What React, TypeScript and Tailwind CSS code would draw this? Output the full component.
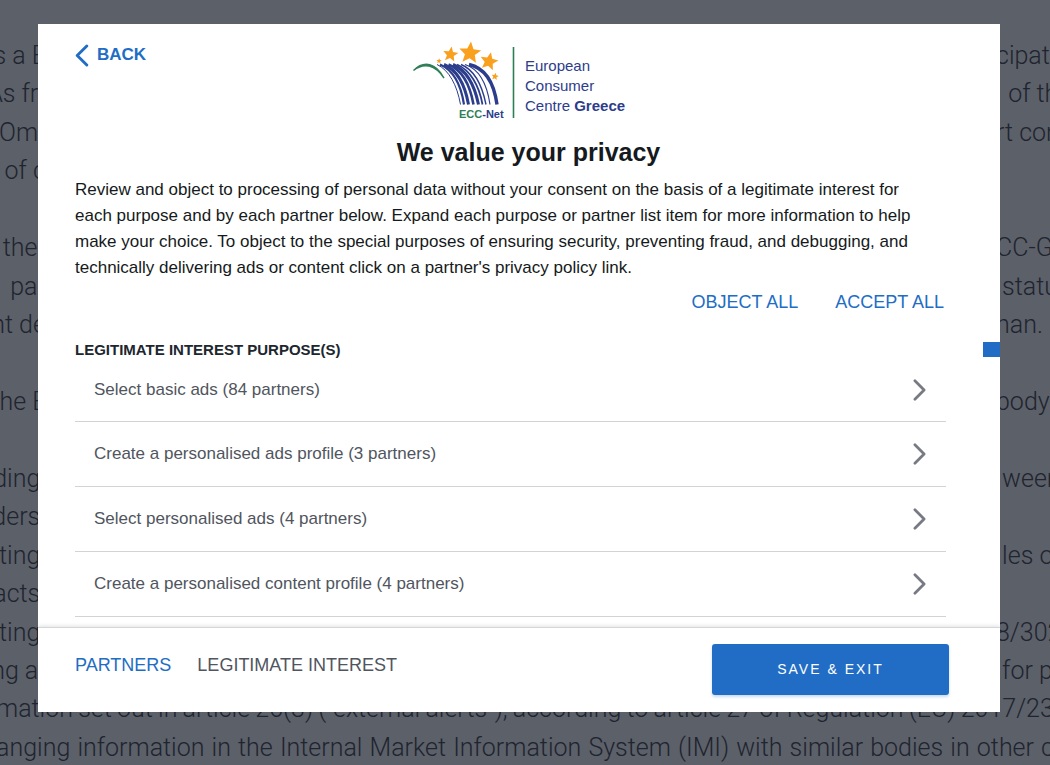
import { useState } from 'react';

type Line = { left?: string; right?: string; full?: string };

const articleLines: Line[] = [
  { left: 'is a E ', right: 'cipation' },
  { left: 'As fro', right: '  of the' },
  { left: 'Omb', right: 'rt cons' },
  { left: 'of c ' },
  {},
  { left: 'the r', right: 'CC-Gr' },
  { left: 'par ', right: ' status' },
  { left: 'ent de ', right: 'nan.' },
  {},
  { left: 'the Ei', right: 'body' },
  {},
  { left: 'nding i', right: ' ween' },
  { left: 'aders i' },
  { left: 'sting i', right: ' les of' },
  { left: 'tacts i' },
  { left: 'sting i', right: '8/302' },
  { left: 'ing an', right: ' for pr' },
  { full: 'mation set out in article 26(3) (“external alerts”), according to article 27 of Regulation (EU) 2017/23' },
  { full: 'anging information in the Internal Market Information System (IMI) with similar bodies in other c' },
];

const purposes = [
  'Select basic ads (84 partners)',
  'Create a personalised ads profile (3 partners)',
  'Select personalised ads (4 partners)',
  'Create a personalised content profile (4 partners)',
];

function ArticleBackdrop() {
  return (
    <div
      aria-hidden="true"
      className="h-screen overflow-hidden bg-[#5c6069] pt-[39px] flex flex-col justify-between font-[Roboto,sans-serif] font-light text-[25px] leading-[34px] text-[#20242f] whitespace-pre"
    >
      {articleLines.map((line, i) =>
        line.full ? (
          <div key={i} className="-ml-1 -mr-1 flex justify-between">
            {line.full.split(' ').map((word, j) => (
              <span key={j}>{word}</span>
            ))}
          </div>
        ) : (
          <div key={i} className="h-[34px] flex justify-between">
            <span className="w-[52px] flex justify-end">{line.left}</span>
            <span className="w-[54px]">{line.right}</span>
          </div>
        )
      )}
    </div>
  );
}

function Chevron({ className, flip }: { className: string; flip?: boolean }) {
  return (
    <svg viewBox="0 0 14 24" className={className} fill="none" stroke="currentColor" strokeWidth="3" strokeLinecap="round" strokeLinejoin="round" aria-hidden="true">
      <path d={flip ? 'M12 2 2 12l10 10' : 'M2 2l10 10L2 22'} />
    </svg>
  );
}

function Star({ x, y, r, turn = 0 }: { x: number; y: number; r: number; turn?: number }) {
  return (
    <path
      transform={`translate(${x} ${y}) rotate(${turn}) scale(${r})`}
      fill="#f9a01f"
      d="M0-1 .27-.36.95-.31.43.14.59.81 0 .45-.59.81-.43.14-.95-.31-.27-.36Z"
    />
  );
}

function Logo() {
  return (
    <svg viewBox="0 0 220 84" className="w-[220px] h-[84px]" role="img" aria-label="European Consumer Centre Greece">
      <Star x={59} y={13} r={11.5} turn={5} />
      <Star x={39.5} y={14.5} r={8} turn={8} />
      <Star x={78} y={21.5} r={9.5} turn={12} />
      <Star x={28} y={21} r={2.8} turn={5} />
      <Star x={84} y={36.5} r={3.8} turn={10} />
      <path d="M2.500 30.500C13 20 25 23 33 38 24 25 13 22 2.500 30.500Z" fill="#2d7f56" stroke="#2d7f56" strokeWidth="1.4" />
      <g fill="none" stroke="#2c3d8c">
        <path d="M26 24.500C38 30 46 45 49.500 64.500" strokeWidth="1" />
        <path d="M29 24.500C42 30 50 45 53 64.500" strokeWidth="2.2" />
        <path d="M33 24.500C46 30 54 45 57.500 64.500" strokeWidth="3" />
        <path d="M37.500 24.500C51 30 59 45 62.500 64.500" strokeWidth="2.6" />
        <path d="M42 24.500C55 30 63.500 45 67.500 64.500" strokeWidth="3" />
        <path d="M46 24.500C59 30 68 45 71.500 64.500" strokeWidth="1.8" />
        <path d="M50 24.500C64 30 71 45 75 64.500" strokeWidth="1.4" />
        <path d="M54 24.500C68 29 76 44 79 64.500" strokeWidth="1.2" />
        <path d="M58 24.500C74 28 83 43 86 64.500" strokeWidth="3.4" />
      </g>
      <g fontFamily="'Liberation Sans', Arial, sans-serif" fill="#2c3d8c">
        <text x="48" y="78" fontSize="11" fontWeight="700">
          <tspan fill="#2d7f56">ECC</tspan>-Net
        </text>
        <text x="114" y="31" fontSize="15">European</text>
        <text x="114" y="51" fontSize="15">Consumer</text>
        <text x="114" y="71" fontSize="15">
          Centre <tspan fontWeight="700">Greece</tspan>
        </text>
      </g>
      <path d="M102.500 7v71" stroke="#2d7f56" strokeWidth="1.6" />
    </svg>
  );
}

export default function App() {
  const [tab, setTab] = useState<'partners' | 'interest'>('interest');

  return (
    <div className="relative">
      <ArticleBackdrop />

      <div className="fixed inset-0 pt-6 pb-[53px] pl-[38px] pr-[50px]">
        <div
          role="dialog"
          aria-labelledby="privacy-title"
          className="relative h-full bg-white flex flex-col overflow-hidden font-['Liberation_Sans',Arial,sans-serif]"
        >
          {/* Scrollable body */}
          <div className="flex-1 min-h-0 overflow-hidden pl-[37px] pr-[54px]">
            <header className="h-[104px] grid grid-cols-[1fr_auto_1fr] items-start">
              <button className="mt-[19px] justify-self-start flex items-center gap-2 text-[17px] leading-[24px] font-bold text-[#216dc5]">
                <Chevron flip className="w-[14px] h-[23px]" />
                BACK
              </button>
              <div className="pt-4 pl-5">
                <Logo />
              </div>
            </header>

            <h1 id="privacy-title" className="pl-9 text-center text-[25px] leading-[48px] font-bold text-[#151a20]">
              We value your privacy
            </h1>
            <p className="pt-px pr-5 text-[17px] leading-[26px] text-[#151a20]">
              Review and object to processing of personal data without your consent on the basis of a legitimate interest for
              each purpose and by each partner below. Expand each purpose or partner list item for more information to help
              make your choice. To object to the special purposes of ensuring security, preventing fraud, and debugging, and
              technically delivering ads or content click on a partner's privacy policy link.
            </p>

            <div className="mt-[9px] flex justify-end gap-[37px] pr-0.5 text-[18px] leading-[24px] text-[#216dc5]">
              <button>OBJECT ALL</button>
              <button>ACCEPT ALL</button>
            </div>

            <h2 className="mt-6 text-[15px] leading-[24px] font-bold text-[#20262e]">LEGITIMATE INTEREST PURPOSE(S)</h2>
            <ul>
              {purposes.map((purpose, i) => (
                <li key={purpose} className="border-b border-[#d2d3d6]">
                  <button
                    className={`w-full flex items-center justify-between pl-[19px] pr-5 text-left text-[17px] text-[#50555e] ${
                      i === 0 ? 'h-[59px] pb-1' : 'h-16'
                    }`}
                  >
                    {purpose}
                    <Chevron className="w-[13px] h-[22px] text-[#777a82]" />
                  </button>
                </li>
              ))}
            </ul>
          </div>

          {/* Scroll marker */}
          <div className="absolute right-0 top-[318px] w-[17px] h-[15px] bg-[#216dc5]" />

          <footer className="h-[85px] shrink-0 border-t border-[#d5d6d8] shadow-[0_-1px_4px_rgba(0,0,0,0.12)] pl-[37px] pr-[51px] flex items-start justify-between">
            <nav className="pt-[25px] flex gap-[26px] text-[18px] leading-[24px]">
              <button onClick={() => setTab('partners')} className={tab === 'partners' ? 'text-[#50555e]' : 'text-[#216dc5]'}>
                PARTNERS
              </button>
              <button onClick={() => setTab('interest')} className={tab === 'interest' ? 'text-[#50555e]' : 'text-[#216dc5]'}>
                LEGITIMATE INTEREST
              </button>
            </nav>
            <button className="mt-4 w-[237px] h-[51px] rounded-[3px] bg-[#216dc5] text-white text-[14px] tracking-[2px] shadow-[0_2px_3px_rgba(33,109,197,0.25)]">
              SAVE &amp; EXIT
            </button>
          </footer>
        </div>
      </div>
    </div>
  );
}
